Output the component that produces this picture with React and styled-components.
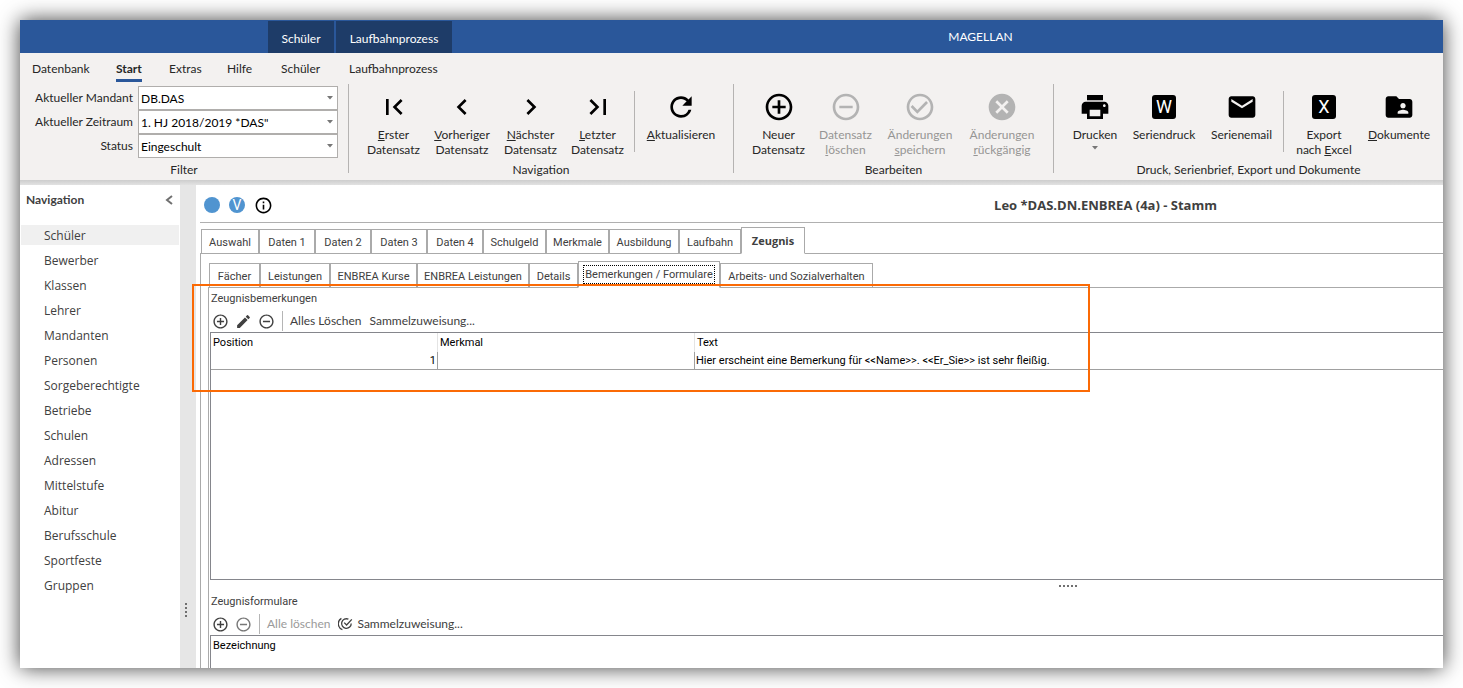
import React from "react";
import styled, { createGlobalStyle, css } from "styled-components";
import {
  MdFirstPage, MdChevronLeft, MdChevronRight, MdLastPage, MdRefresh,
  MdAddCircleOutline, MdRemoveCircleOutline, MdCheckCircleOutline, MdCancel,
  MdPrint, MdEmail, MdFolderShared, MdEdit, MdInfoOutline,
} from "react-icons/md";

const ribbonFont = `Lato, "Noto Sans", sans-serif`;
const listFont = `"Open Sans", "Noto Sans", sans-serif`;
const formFont = `Roboto, "Noto Sans", sans-serif`;

const GlobalStyle = createGlobalStyle`
  * { box-sizing: border-box; }
  body { margin: 0; background: #fff; font: 12px/16px ${ribbonFont}; color: #262626; }
  button, select { font: inherit; color: inherit; }
  button { border: 0; background: none; padding: 0; margin: 0; white-space: nowrap; }
  svg { display: block; flex: none; }
`;

const Page = styled.div`
  height: 100vh;
  padding: 20px;
`;
const Window = styled.div`
  display: flex;
  flex-direction: column;
  height: 100%;
  background: #fff;
  box-shadow: 0 0 20px rgba(0, 0, 0, 0.75);
`;

const TitleBar = styled.header`
  display: flex;
  flex: none;
  gap: 2px;
  height: 33px;
  padding: 1px 0 0 248px;
  background: #2a579a;
  color: #fff;
`;
const ContextTab = styled.button`
  width: ${(p) => p.$width}px;
  padding-top: 4px;
  background: #1e3c68;
`;
const AppTitle = styled.h1`
  flex: 1;
  margin: 0;
  padding: 8px 0 0 64px;
  font-size: 12px;
  line-height: 16px;
  font-weight: 400;
  text-align: center;
`;

const Ribbon = styled.div`
  flex: none;
  background: #f3f1f0;
`;
const MenuBar = styled.nav`
  display: flex;
  height: 31px;
  padding: 8px 0 0 12px;
`;
const MenuItem = styled.button`
  display: flex;
  align-items: flex-start;
  width: ${(p) => p.$width}px;
  span {
    padding-bottom: 2px;
    ${(p) => p.$active && css`font-weight: 700; border-bottom: 3px solid #2a579a;`}
  }
`;

const RibbonGroups = styled.div`
  display: flex;
  height: 96px;
`;
const Group = styled.section`
  display: flex;
  flex: ${(p) => (p.$width ? `none` : `1 1 0`)};
  width: ${(p) => (p.$width ? `${p.$width}px` : `auto`)};
  flex-direction: column;
  height: 89px;
  border-right: ${(p) => (p.$width ? `1px solid #b5b3b2` : `0`)};
`;
const GroupItems = styled.div`
  display: flex;
  flex: none;
  height: 78px;
  padding-left: 11px;
`;
const GroupName = styled.div`
  text-align: center;
  white-space: nowrap;
`;
const GroupDivider = styled.div`
  width: 1px;
  height: 61px;
  margin: 7px 4px 0 3px;
  background: #b5b3b2;
`;
const ToolButton = styled.button`
  display: flex;
  flex: none;
  flex-direction: column;
  align-items: center;
  width: ${(p) => p.$width}px;
  padding-top: 7px;
  line-height: 15px;
  &:disabled { color: #969594; }
  > svg:first-child {
    margin-bottom: 4px;
    color: ${(p) => (p.disabled ? "#b3b3b3" : "#000")};
  }
  > svg:last-child { margin-top: 4px; }
`;

const Filters = styled.div`
  display: flex;
  flex: none;
  flex-direction: column;
  height: 78px;
  padding: 2px 10px 0 0;
`;
const FilterRow = styled.label`
  display: flex;
  justify-content: flex-end;
  height: 24px;
  line-height: 24px;
`;
const SelectBox = styled.span`
  position: relative;
  margin-left: 5px;
  svg { position: absolute; right: 5px; top: 10px; }
  select {
    display: block;
    width: 200px;
    height: 24px;
    padding: 0 20px 4px 2px;
    appearance: none;
    border: 1px solid #b0aeac;
    border-radius: 0;
    background: #fff;
    color: #000;
  }
`;

const RibbonEdge = styled.div`
  flex: none;
  height: 5px;
  background: linear-gradient(#cdcdcd, #e2e2e2);
`;
const Body = styled.div`
  display: flex;
  flex: 1;
  min-height: 0;
`;

const Sidebar = styled.aside`
  flex: none;
  width: 160px;
  overflow: hidden;
  color: #404040;
`;
const SidebarHead = styled.div`
  display: flex;
  justify-content: space-between;
  align-items: center;
  height: 30px;
  margin-bottom: 10px;
  padding: 0 7px 0 6px;
  h2 { margin: 0; font: 700 12px/16px ${ribbonFont}; }
`;
const NavList = styled.ul`
  display: grid;
  gap: 5px;
  margin: 0;
  padding: 0 1px;
  list-style: none;
  font-family: ${listFont};
`;
const NavLink = styled.a`
  display: block;
  height: 20px;
  padding-left: 23px;
  line-height: 21px;
  color: inherit;
  text-decoration: none;
  background: ${(p) => (p.$active ? "#f0f0f0" : "none")};
`;

const Splitter = styled.div`
  display: flex;
  flex: none;
  flex-direction: column;
  justify-content: flex-end;
  gap: 2px;
  width: 16px;
  padding: 0 0 51px 5px;
  background: #e6e6e6;
`;
const Dot = styled.i`
  width: 2px;
  height: 2px;
  background: #707070;
`;

const Main = styled.main`
  display: flex;
  flex: 1;
  flex-direction: column;
  min-width: 0;
  padding-left: 4px;
  font: 11px/14px ${formFont};
  color: #404040;
`;
const RecordHead = styled.div`
  display: flex;
  flex: none;
  align-items: center;
  gap: 9px;
  height: 38px;
  padding: 3px 0 0 4px;
  border-bottom: 1px solid #b0b0b0;
  h2 { flex: 1; margin: 0; padding-left: 486px; font: 700 13px/16px ${listFont}; text-align: center; white-space: nowrap; }
`;
const Badge = styled.span`
  width: 16px;
  height: 16px;
  border-radius: 50%;
  background: #5094d0;
  color: #fff;
  font: 14px/16px ${formFont};
  text-align: center;
`;

/* The strip carries the panel's top line; the active tab covers it. */
const TabStrip = styled.div`
  display: flex;
  flex: none;
  align-items: flex-end;
  height: ${(p) => p.$height}px;
  padding-left: 1px;
  box-shadow: inset 0 -1px #aaa;
`;
const Tab = styled.button`
  flex: none;
  width: ${(p) => p.$width}px;
  height: 25px;
  padding-top: 3px;
  border: 1px solid #aaa;
  ${(p) => p.$active && css`
    height: 27px;
    padding-top: 1px;
    border-bottom-color: #fff;
    background: #fff;
  `}
  ${(p) => p.$bold && css`font: 700 11px/14px ${listFont};`}
  span {
    padding: 2px 1px;
    outline: ${(p) => (p.$focused ? "1px dotted #000" : "none")};
  }
`;
const TabPanel = styled.div`
  position: relative;
  display: flex;
  flex: 1;
  flex-direction: column;
  min-height: 0;
  padding-left: ${(p) => p.$inset}px;
  border-left: 1px solid #aaa;
`;

const Highlight = styled.div`
  position: absolute;
  left: -17px;
  top: -4px;
  width: 898px;
  height: 108px;
  border: 2px solid #fb6a05;
  pointer-events: none;
`;
const SectionName = styled.h3`
  flex: none;
  margin: 0;
  padding: 4px 0 4px 1px;
  font: inherit;
`;
const Toolbar = styled.div`
  display: flex;
  flex: none;
  align-items: center;
  gap: 6px;
  height: 22px;
  padding-left: 2px;
  font: 12px/16px ${ribbonFont};
`;
const ToolAction = styled.button`
  display: flex;
  align-items: center;
  gap: 4px;
  padding-right: 2px;
  color: ${(p) => (p.disabled ? "#9a9a9a" : "#404040")};
`;
const IconAction = styled.button`
  width: 17px;
  color: ${(p) => (p.disabled ? "#777" : "#404040")};
`;
const ToolbarDivider = styled.div`
  width: 1px;
  height: 20px;
  margin: 0 1px;
  background: #b5b5b5;
`;

const GridFrame = styled.div`
  flex: 1;
  min-height: 0;
  border: solid #85868c;
  border-width: ${(p) => (p.$open ? "1px 0 0 1px" : "1px 0 1px 1px")};
  overflow: hidden;
`;
const Table = styled.table`
  width: 100%;
  table-layout: fixed;
  border-collapse: separate;
  border-spacing: 0;
  color: #000;
  line-height: 14px;
  th, td { padding: 0 2px; font-weight: 400; text-align: left; white-space: nowrap; }
  th { height: 19px; }
  td { height: 18px; padding: 0 1px; border-bottom: 1px solid #a0a0a0; }
  th:not(:last-child) { border-right: 1px solid #e4e4e4; }
  td:not(:last-child) { border-right: 1px solid #a0a0a0; }
  td:first-child { text-align: right; }
`;
const HSplit = styled.div`
  display: flex;
  flex: none;
  justify-content: center;
  gap: 2px;
  height: 11px;
  padding: 5px 0 0 483px;
`;
const FormsSection = styled.section`
  display: flex;
  flex: none;
  flex-direction: column;
  height: 77px;
`;

const DownArrow = () => (
  <svg width="6" height="4" viewBox="0 0 6 4"><path d="M0 0h6L3 3.5z" fill="#777" /></svg>
);
const LetterIcon = ({ letter }) => (
  <svg width="32" height="32" viewBox="0 0 32 32">
    <rect x="4" y="4" width="24" height="24" rx="3" fill="#000" />
    <text x="16" y="22" textAnchor="middle" fontFamily="Roboto, sans-serif" fontSize="18" fill="#fff">{letter}</text>
  </svg>
);
const MultiCheck = () => (
  <svg width="15" height="14" viewBox="0 0 15 14" fill="none" stroke="#404040" strokeWidth="1.3">
    <path d="M13.2 6.4A4.8 4.8 0 1 1 10.4 2.2" />
    <path d="M6.2 5.6l2.4 2.4L13.8 2.4" />
    <path d="M3.4 1.4A6.2 6.2 0 0 0 4.4 12.6" />
  </svg>
);
const Collapse = () => (
  <svg width="8" height="10" viewBox="0 0 8 10" fill="none" stroke="#707070" strokeWidth="2"><path d="M7 1L2 5l5 4" /></svg>
);

const Tool = ({ icon, width, disabled, children, menu }) => (
  <ToolButton $width={width} disabled={disabled}>
    {icon}
    <span>{children}</span>
    {menu && <DownArrow />}
  </ToolButton>
);
const Filter = ({ label, value }) => (
  <FilterRow>
    {label}
    <SelectBox>
      <select defaultValue={value}><option>{value}</option></select>
      <DownArrow />
    </SelectBox>
  </FilterRow>
);

const menu = [["Datenbank", 84], ["Start", 53], ["Extras", 58], ["Hilfe", 54], ["Schüler", 68], ["Laufbahnprozess", 100]];
const navItems = ["Schüler", "Bewerber", "Klassen", "Lehrer", "Mandanten", "Personen", "Sorgeberechtigte", "Betriebe",
  "Schulen", "Adressen", "Mittelstufe", "Abitur", "Berufsschule", "Sportfeste", "Gruppen"];
const recordTabs = [["Auswahl", 58], ["Daten 1", 56], ["Daten 2", 56], ["Daten 3", 56], ["Daten 4", 56], ["Schulgeld", 63],
  ["Merkmale", 63], ["Ausbildung", 70], ["Laufbahn", 62], ["Zeugnis", 64]];
const reportTabs = [["Fächer", 51], ["Leistungen", 70], ["ENBREA Kurse", 87], ["ENBREA Leistungen", 112], ["Details", 49],
  ["Bemerkungen / Formulare", 142], ["Arbeits- und Sozialverhalten", 153]];

export default function App() {
  return (
    <Page>
      <GlobalStyle />
      <Window>
        <TitleBar>
          <ContextTab $width={66}>Schüler</ContextTab>
          <ContextTab $width={116}>Laufbahnprozess</ContextTab>
          <AppTitle>MAGELLAN</AppTitle>
        </TitleBar>
        <Ribbon>
          <MenuBar>
            {menu.map(([name, width]) => (
              <MenuItem key={name} $width={width} $active={name === "Start"}><span>{name}</span></MenuItem>
            ))}
          </MenuBar>
          <RibbonGroups>
            <Group $width={329}>
              <Filters>
                <Filter label="Aktueller Mandant" value="DB.DAS" />
                <Filter label="Aktueller Zeitraum" value={'1. HJ 2018/2019 *DAS"'} />
                <Filter label="Status" value="Eingeschult" />
              </Filters>
              <GroupName>Filter</GroupName>
            </Group>
            <Group $width={385}>
              <GroupItems>
                <Tool width={67} icon={<MdFirstPage size={32} />}><u>E</u>rster<br />Datensatz</Tool>
                <Tool width={70} icon={<MdChevronLeft size={32} />}><u>V</u>orheriger<br />Datensatz</Tool>
                <Tool width={67} icon={<MdChevronRight size={32} />}><u>N</u>ächster<br />Datensatz</Tool>
                <Tool width={67} icon={<MdLastPage size={32} />}><u>L</u>etzter<br />Datensatz</Tool>
                <GroupDivider />
                <Tool width={84} icon={<MdRefresh size={32} />}><u>A</u>ktualisieren</Tool>
              </GroupItems>
              <GroupName>Navigation</GroupName>
            </Group>
            <Group $width={320}>
              <GroupItems>
                <Tool width={67} icon={<MdAddCircleOutline size={32} />}>Neuer<br />Datensatz</Tool>
                <Tool width={67} disabled icon={<MdRemoveCircleOutline size={32} />}>Datensatz<br /><u>l</u>öschen</Tool>
                <Tool width={82} disabled icon={<MdCheckCircleOutline size={32} />}>Änderungen<br /><u>s</u>peichern</Tool>
                <Tool width={82} disabled icon={<MdCancel size={32} />}>Änderungen<br /><u>r</u>ückgängig</Tool>
              </GroupItems>
              <GroupName>Bearbeiten</GroupName>
            </Group>
            <Group>
              <GroupItems>
                <Tool width={60} menu icon={<MdPrint size={32} />}>Drucken</Tool>
                <Tool width={78} icon={<LetterIcon letter="W" />}>Seriendruck</Tool>
                <Tool width={77} icon={<MdEmail size={32} />}>Serienemail</Tool>
                <GroupDivider />
                <Tool width={72} icon={<LetterIcon letter="X" />}>Export<br />nach <u>E</u>xcel</Tool>
                <Tool width={78} icon={<MdFolderShared size={32} />}><u>D</u>okumente</Tool>
              </GroupItems>
              <GroupName>Druck, Serienbrief, Export und Dokumente</GroupName>
            </Group>
          </RibbonGroups>
        </Ribbon>
        <RibbonEdge />
        <Body>
          <Sidebar>
            <SidebarHead><h2>Navigation</h2><button aria-label="Einklappen"><Collapse /></button></SidebarHead>
            <NavList>
              {navItems.map((name) => (
                <li key={name}><NavLink href="#" $active={name === "Schüler"}>{name}</NavLink></li>
              ))}
            </NavList>
          </Sidebar>
          <Splitter><Dot /><Dot /><Dot /><Dot /></Splitter>
          <Main>
            <RecordHead>
              <Badge />
              <Badge>V</Badge>
              <MdInfoOutline size={19} color="#000" />
              <h2>Leo *DAS.DN.ENBREA (4a) - Stamm</h2>
            </RecordHead>
            <TabStrip $height={31}>
              {recordTabs.map(([name, width]) => (
                <Tab key={name} $width={width} $active={name === "Zeugnis"} $bold={name === "Zeugnis"}><span>{name}</span></Tab>
              ))}
            </TabStrip>
            <TabPanel $inset={7}>
              <TabStrip $height={34}>
                {reportTabs.map(([name, width]) => {
                  const active = name.startsWith("Bemerkungen");
                  return <Tab key={name} $width={width} $active={active} $focused={active}><span>{name}</span></Tab>;
                })}
              </TabStrip>
              <TabPanel $inset={1}>
                <SectionName>Zeugnisbemerkungen</SectionName>
                <Toolbar>
                  <IconAction aria-label="Hinzufügen"><MdAddCircleOutline size={17} /></IconAction>
                  <IconAction aria-label="Bearbeiten"><MdEdit size={17} /></IconAction>
                  <IconAction aria-label="Entfernen"><MdRemoveCircleOutline size={17} /></IconAction>
                  <ToolbarDivider />
                  <ToolAction>Alles Löschen</ToolAction>
                  <ToolAction>Sammelzuweisung...</ToolAction>
                </Toolbar>
                <GridFrame>
                  <Table>
                    <colgroup><col width="227" /><col width="257" /><col /></colgroup>
                    <thead><tr><th>Position</th><th>Merkmal</th><th>Text</th></tr></thead>
                    <tbody>
                      <tr><td>1</td><td /><td>{"Hier erscheint eine Bemerkung für <<Name>>. <<Er_Sie>> ist sehr fleißig."}</td></tr>
                    </tbody>
                  </Table>
                </GridFrame>
                <HSplit><Dot /><Dot /><Dot /><Dot /><Dot /></HSplit>
                <FormsSection>
                  <SectionName>Zeugnisformulare</SectionName>
                  <Toolbar>
                    <IconAction aria-label="Hinzufügen"><MdAddCircleOutline size={17} /></IconAction>
                    <IconAction aria-label="Entfernen" disabled><MdRemoveCircleOutline size={17} /></IconAction>
                    <ToolbarDivider />
                    <ToolAction disabled>Alle löschen</ToolAction>
                    <ToolAction><MultiCheck />Sammelzuweisung...</ToolAction>
                  </Toolbar>
                  <GridFrame $open>
                    <Table><thead><tr><th>Bezeichnung</th></tr></thead></Table>
                  </GridFrame>
                </FormsSection>
                <Highlight />
              </TabPanel>
            </TabPanel>
          </Main>
        </Body>
      </Window>
    </Page>
  );
}
